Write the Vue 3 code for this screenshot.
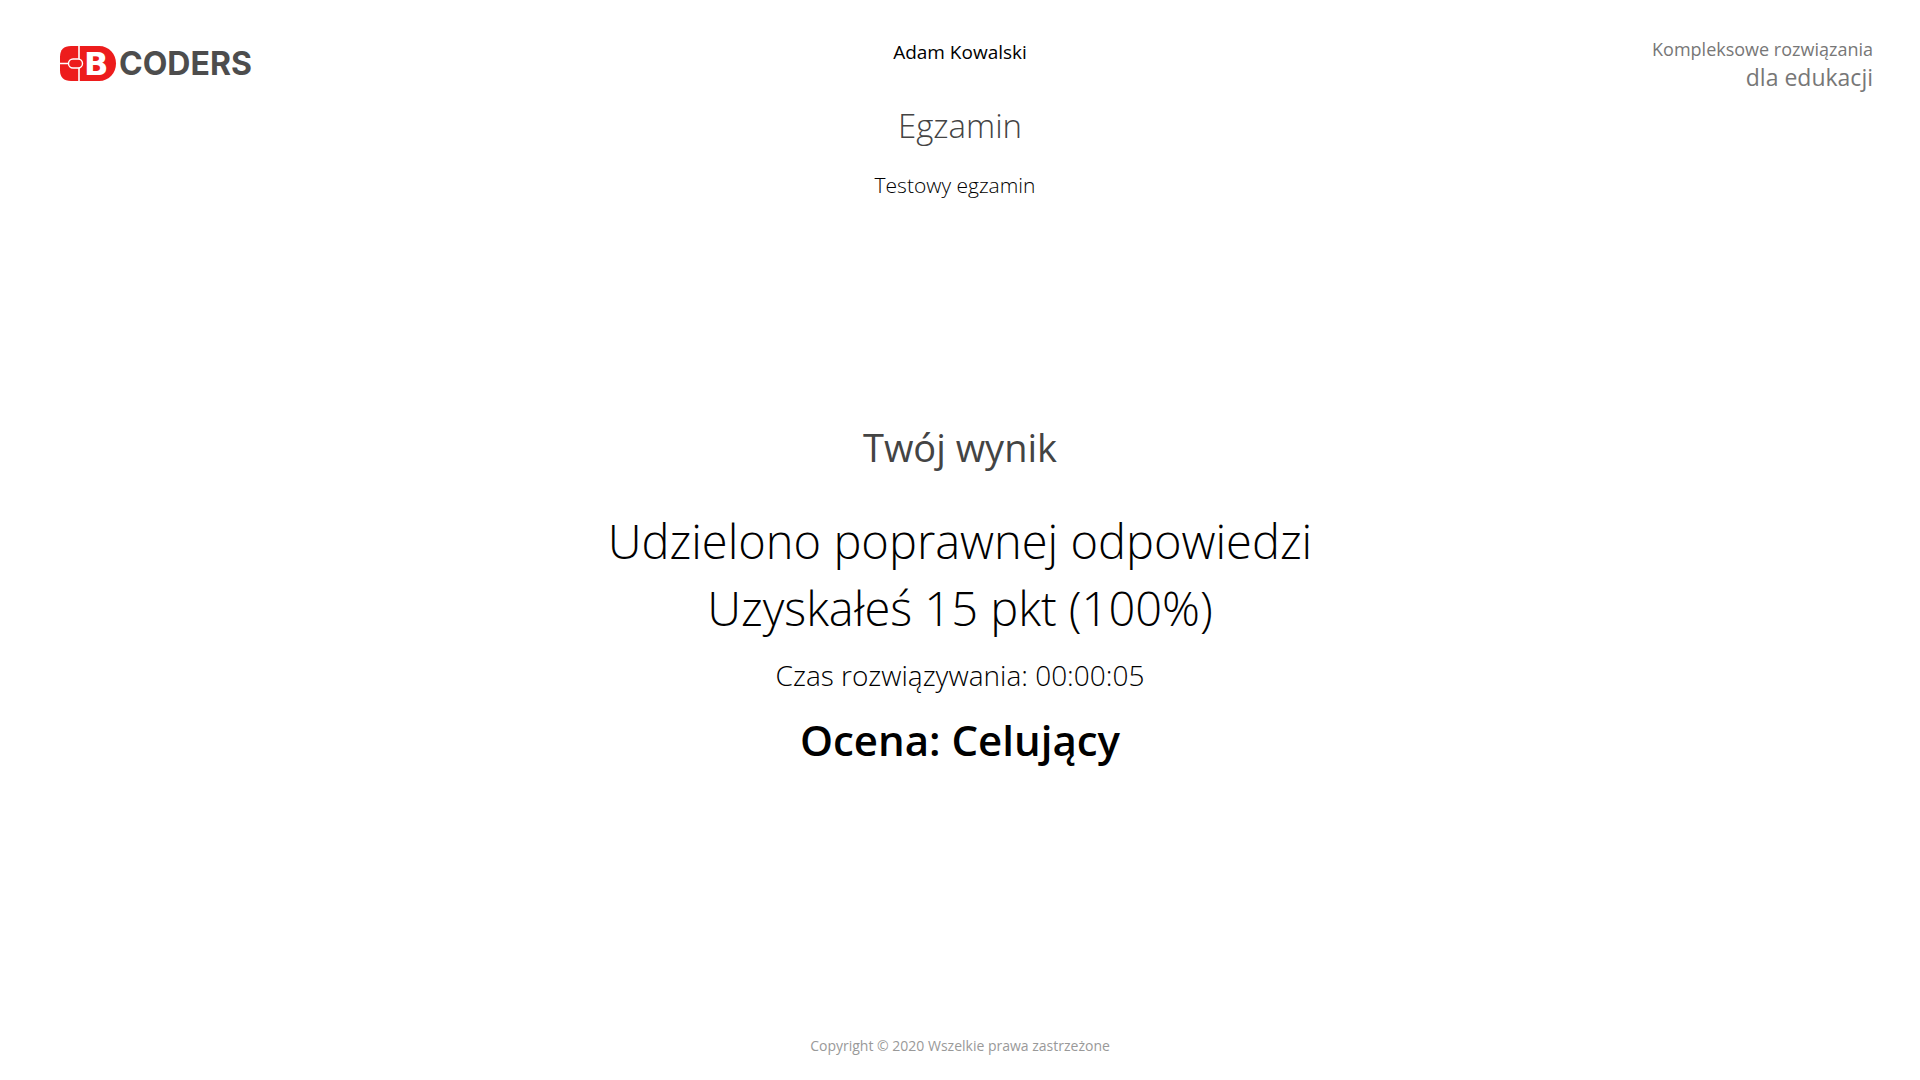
<script setup>
const student = 'Adam Kowalski'
const exam = 'Testowy egzamin'
const result = {
  answer: 'Udzielono poprawnej odpowiedzi',
  score: 'Uzyskałeś 15 pkt (100%)',
  time: '00:00:05',
  grade: 'Celujący',
}
</script>

<template>
  <div class="page">
    <header class="top">
      <svg class="logo" width="208" height="48" viewBox="0 -6 208 48" role="img" aria-label="B Coders">
        <path d="M11 0H39C49 0 56 8 56 17.5S49 35 39 35H11Q0 35 0 24V11Q0 0 11 0Z" fill="#ed1c1c" />
        <path d="M19 0V13M19 22V35M0 17.5H9" stroke="#fff" stroke-width="1.6" fill="none" />
        <rect x="8.5" y="13" width="14" height="9" rx="4.5" fill="#ed1c1c" stroke="#fff" stroke-width="1.4" />
        <text class="logo-b" x="24" y="29">B</text>
        <text class="logo-name" x="59" y="29">CODERS</text>
      </svg>
      <div class="heading">
        <p class="student">{{ student }}</p>
        <h1 class="title">Egzamin</h1>
        <p class="exam">{{ exam }}</p>
      </div>
      <p class="slogan">
        <span class="slogan-first">Kompleksowe rozwiązania</span>
        <span class="slogan-second">dla edukacji</span>
      </p>
    </header>

    <main class="result">
      <h2 class="result-title">Twój wynik</h2>
      <p class="line">{{ result.answer }}</p>
      <p class="line">{{ result.score }}</p>
      <p class="time">Czas rozwiązywania: {{ result.time }}</p>
      <p class="grade">Ocena: {{ result.grade }}</p>
    </main>

    <footer class="copyright">Copyright © 2020 Wszelkie prawa zastrzeżone</footer>
  </div>
</template>

<style>
body {
  margin: 0;
  background: #fff;
}
</style>

<style scoped>
.page {
  display: flex;
  flex-direction: column;
  box-sizing: border-box;
  min-height: 100vh;
  padding: 35px 47px 20px;
  font-family: "Open Sans", "Noto Sans", sans-serif;
  color: #000;
}
p,
h1,
h2 {
  margin: 0;
}
.top {
  display: grid;
  grid-template-columns: 1fr auto 1fr;
  align-items: start;
}
.logo {
  margin: 5px 0 0 13px;
}
.logo-b {
  font: 700 32px "DejaVu Sans", sans-serif;
  fill: #fff;
}
.logo-name {
  font: 700 32px Inter, sans-serif;
  fill: #4d4d4d;
}
.heading {
  text-align: center;
}
.student {
  font-size: 19px;
  line-height: 34px;
}
.title {
  margin-top: 33px;
  font-size: 33px;
  font-weight: 300;
  line-height: 48px;
  color: #444;
}
.exam {
  margin-top: 19px;
  padding-right: 10px;
  font-size: 21px;
  font-weight: 300;
  line-height: 32px;
}
.slogan {
  display: flex;
  flex-direction: column;
  text-align: right;
  color: #777;
}
.slogan-first {
  font-size: 18px;
  line-height: 28px;
}
.slogan-second {
  font-size: 23px;
  line-height: 28px;
}
.result {
  flex: 1;
  padding-top: 218px;
  text-align: center;
}
.result-title {
  font-size: 38px;
  font-weight: 400;
  line-height: 56px;
  color: #444;
}
.line {
  font-size: 47px;
  font-weight: 300;
  line-height: 67px;
}
.result-title + .line {
  margin-top: 33px;
}
.time {
  margin-top: 13px;
  font-size: 28px;
  font-weight: 300;
  line-height: 40px;
}
.grade {
  margin-top: 15px;
  font-size: 42px;
  font-weight: 600;
  line-height: 60px;
}
.copyright {
  font-size: 14px;
  line-height: 28px;
  text-align: center;
  color: #999;
}
</style>
